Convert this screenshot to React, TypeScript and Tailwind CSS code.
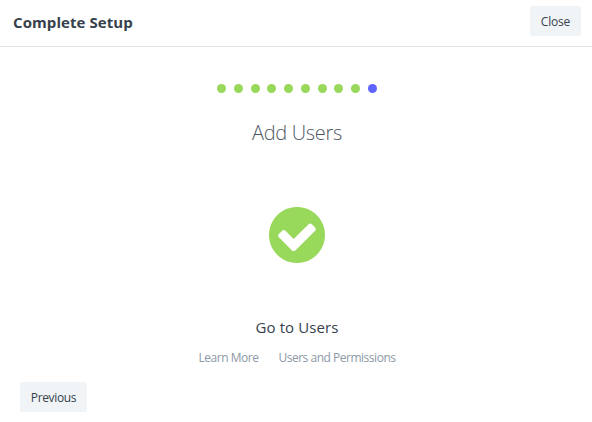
import React from "react";

const DOTS = 10;

function CheckCircle() {
  return (
    <svg viewBox="0 0 1536 1536" className="h-14 w-14 fill-[#98d85b]" aria-hidden="true">
      <path d="M1284 606q0-28-18-46l-91-90q-19-19-45-19t-45 19l-408 407-226-226q-19-19-45-19t-45 19l-91 90q-18 18-18 46 0 27 18 45l362 362q19 19 45 19 27 0 46-19l543-543q18-18 18-45zM1536 768q0 209-103 385.5t-279.5 279.5-385.5 103-385.5-103-279.5-279.5-103-385.5 103-385.5 279.5-279.5 385.5-103 385.5 103 279.5 279.5 103 385.5z" />
    </svg>
  );
}

function Button({ children, className }: { children: React.ReactNode; className: string }) {
  return (
    <button
      className={`flex h-[30px] items-center justify-center rounded-[3px] bg-[#f0f4f7] pt-0.5 text-xs text-[#36414c] ${className}`}
    >
      {children}
    </button>
  );
}

export default function App() {
  return (
    <div className="flex h-[422px] w-[592px] flex-col bg-white font-['Open_Sans','Noto_Sans',sans-serif] text-[#36414c]">
      <header className="flex h-[47px] items-start justify-between border-b border-[#e3e3e3] pt-1.5 pr-[11px] pl-[13px]">
        <h1 className="pt-1 text-[15px] leading-6 font-bold tracking-[0.08px]">Complete Setup</h1>
        <Button className="w-[51px] tracking-[-0.2px]">Close</Button>
      </header>
      <main className="flex flex-col items-center pt-[37px] pl-[2px]">
        <div className="flex gap-[7.8px]">
          {Array.from({ length: DOTS }, (_, i) => (
            <span
              key={i}
              className={`h-[9px] w-[9px] rounded-full ${i === DOTS - 1 ? "bg-[#5e64ff]" : "bg-[#98d85b]"}`}
            />
          ))}
        </div>
        <h2 className="mt-[26px] text-[20px] leading-[28px] font-light tracking-[-0.3px] text-[#4f5963]">
          Add Users
        </h2>
        <div className="mt-[60px]">
          <CheckCircle />
        </div>
        <p className="mt-[54px] text-[15px] leading-5 tracking-[0.1px]">Go to Users</p>
        <div className="mt-[13px] flex gap-5 text-xs leading-4 tracking-[-0.48px] text-[#8d99a6]">
          <a>Learn More</a>
          <a>Users and Permissions</a>
        </div>
      </main>
      <footer className="mt-4 pl-5">
        <Button className="w-[67px] tracking-[-0.35px]">Previous</Button>
      </footer>
    </div>
  );
}
